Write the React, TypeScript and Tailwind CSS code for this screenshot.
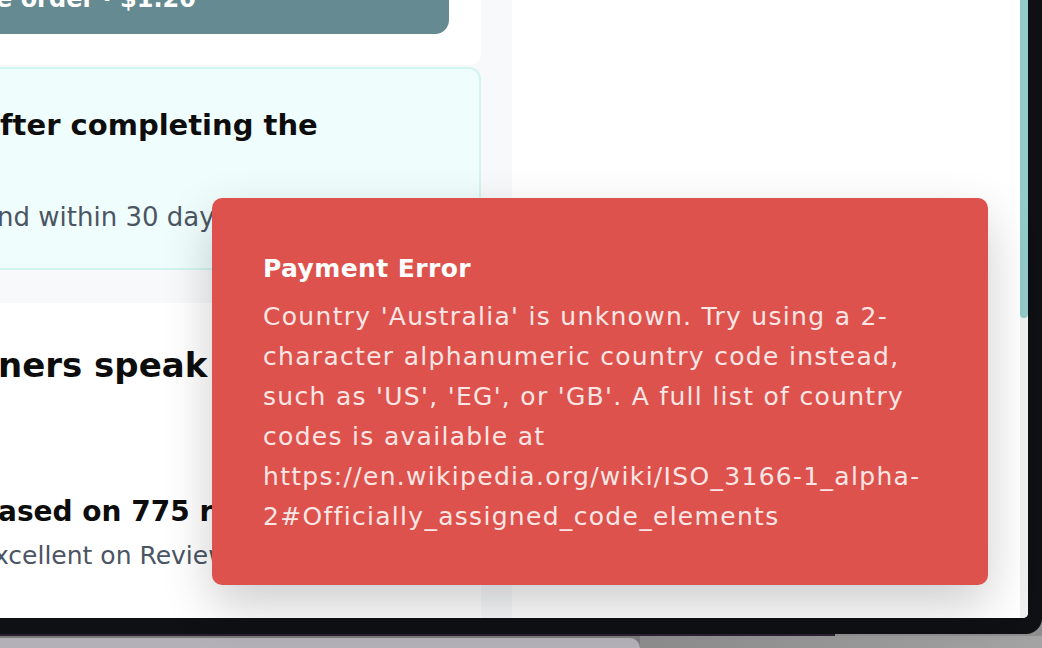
import React from "react";

const font = "font-['DejaVu_Sans',sans-serif]";

export default function App() {
  return (
    <div className={`relative w-[1042px] h-[648px] overflow-hidden bg-[#8e8e8e] ${font}`}>
      {/* device */}
      <div className="h-[634px] bg-[#0f1014] rounded-br-[16px] pr-[14px] pb-[16px]">
        <div className="h-full flex bg-white rounded-br-[5px] overflow-hidden">
          {/* page content */}
          <div className="flex-1 flex">
            {/* left column */}
            <div className="w-[512px] flex flex-col">
              <div className="h-[303px] bg-[#f8f9fb] pr-[31px] flex flex-col">
                {/* order card */}
                <div className="h-[65px] bg-white rounded-br-[12px]">
                  <div className="w-[449px] h-[34px] bg-[#658a91] rounded-br-[14px] overflow-hidden">
                    <div className="-mt-[13px] -ml-[4px] text-[24px] leading-[24px] font-bold text-white whitespace-nowrap">
                      e order · $1.20
                    </div>
                  </div>
                </div>
                {/* guarantee card */}
                <div className="mt-[2px] h-[203px] bg-[#effdfd] border-2 border-l-0 border-[#d2f6ef] rounded-r-[12px] overflow-hidden">
                  <div className="mt-[38px] text-[29px] leading-[36px] font-bold text-[#0d0d0d] whitespace-nowrap">
                    fter completing the
                  </div>
                  <div className="mt-[58px] -ml-[3px] text-[26px] leading-[32px] text-[#4b5563] whitespace-nowrap">
                    nd within 30 days
                  </div>
                </div>
              </div>
              {/* reviews */}
              <div className="flex-1 flex bg-[#f8f9fb]">
                <div className="w-[481px] bg-white overflow-hidden">
                  <div className="mt-[42px] -ml-[2px] text-[34px] leading-[40px] font-bold text-[#0d0d0d] whitespace-nowrap">
                    ners speak for us
                  </div>
                  <div className="mt-[110px] -ml-[2px] text-[28px] leading-[34px] font-bold text-[#0d0d0d] whitespace-nowrap">
                    ased on 775 reviews
                  </div>
                  <div className="mt-[11px] -ml-[6px] text-[25px] leading-[32px] text-[#4b5563] whitespace-nowrap">
                    xcellent on Reviews.io
                  </div>
                </div>
              </div>
            </div>
            {/* right column */}
            <div className="flex-1 bg-white" />
          </div>
          {/* scrollbar */}
          <div className="w-[8px] bg-[#f0f0f0]">
            <div className="h-[318px] bg-[#93cbca] rounded-b-[4px]" />
          </div>
        </div>
      </div>
      {/* surface below device */}
      <div className="h-[14px] flex flex-col">
        <div className="h-[2px] w-[835px] bg-[#2b2030]" />
        <div className="flex-1 flex bg-[#7a7a7a]">
          <div className="w-[640px] mt-[2px] bg-[#b4b0b7] rounded-tr-[20px]" />
          <div className="flex-1 bg-gradient-to-r from-[#8c8c8c] to-[#a3a3a3]" />
        </div>
      </div>

      {/* toast */}
      <div className="absolute left-[212px] top-[198px] w-[776px] h-[387px] bg-[#dd524c] rounded-[10px] shadow-[0_20px_50px_rgba(0,0,0,0.2)] pl-[51px] pt-[51px]">
        <div className="text-[25px] leading-[40px] font-bold tracking-[0.4px] text-white whitespace-nowrap">
          Payment Error
        </div>
        <div className="mt-[8px] text-[25px] leading-[40px] tracking-[1.3px] text-[#fbe6e5]">
          <div className="whitespace-nowrap">Country 'Australia' is unknown. Try using a 2-</div>
          <div className="whitespace-nowrap">character alphanumeric country code instead,</div>
          <div className="whitespace-nowrap">such as 'US', 'EG', or 'GB'. A full list of country</div>
          <div className="whitespace-nowrap">codes is available at</div>
          <div className="whitespace-nowrap">https://en.wikipedia.org/wiki/ISO_3166-1_alpha-</div>
          <div className="whitespace-nowrap">2#Officially_assigned_code_elements</div>
        </div>
      </div>
    </div>
  );
}
